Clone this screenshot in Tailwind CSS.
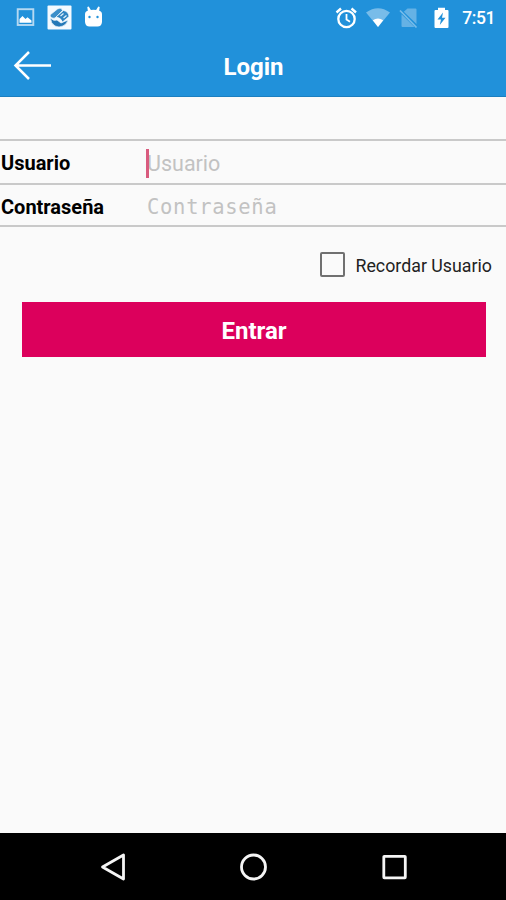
<!DOCTYPE html>
<html lang="es">
<head>
<meta charset="utf-8">
<title>Login</title>
<script src="https://cdn.jsdelivr.net/npm/@tailwindcss/browser@4"></script>
</head>
<body class="flex h-[900px] w-[506px] flex-col overflow-hidden bg-[#fafafa] font-['Roboto',sans-serif] text-black">
<header class="h-[97px] shrink-0 border-b border-[#1c7fc0] bg-[#2191da] text-white">
  <div class="flex h-[35px] items-center justify-between pl-4 pr-[11px]">
    <div class="flex items-center">
      <svg class="h-[19px] w-[19px]" viewBox="0 0 19 19"><rect x="1.7" y="1.2" width="15.6" height="15.8" fill="none" stroke="#b5d9f2" stroke-width="1.9"/><path d="M3.500 14.800V11l3-3 3 3 2-1.800 4 3.300v2.300z" fill="#fff"/></svg>
      <svg class="ml-3 h-[25px] w-[25px]" viewBox="0 0 25 25"><rect x=".5" y=".5" width="24" height="24" rx="1" fill="#f4faff"/><g stroke="#f4faff" stroke-width=".7" stroke-linejoin="round"><path d="M3 10 10.500 4q4-2 5 1.500L8 13q-4 1-5-3z" fill="#3b8fca"/><path d="M3.500 13q3 3.500 6.500 2l4 3 7-3q-1 4-5 6-4 2-8 0-4.500-3-4.500-8z" fill="#2479b8"/><path d="m9 12 7.500-6.500q5 1 5.500 6L15.500 17Q14 12.500 9 12z" fill="#2f84c2"/></g><path d="m13.500 11 3-2.500M16.500 13l3-2.500" stroke="#e5f3fc" stroke-width="1.200"/></svg>
      <svg class="ml-3 h-[23px] w-[19px]" viewBox="0 0 19 23" fill="#fff"><path d="M1 8.500q0-3 2.800-3.700L3.300 1l1.400-.4L6.900 4Q9.500 3.500 12.100 4L14.300.6l1.400.4-.5 3.800Q18 5.500 18 8.500V16q-.5 4.500-4.500 4.500h-8Q1.500 20.500 1 16z"/><circle cx="5.500" cy="11" r="1.200" fill="#2191da"/><circle cx="13.500" cy="11" r="1.200" fill="#2191da"/></svg>
    </div>
    <div class="flex items-center">
      <svg class="h-[22px] w-[22px]" viewBox="0 0 22 22" fill="none" stroke="#fff" stroke-width="2.300"><circle cx="11.500" cy="12" r="8.200"/><path d="m1.500 5.500 4.500-4M21 5.500l-4.500-4" stroke-width="2.400"/><path d="M11.500 7v5.500l3.500 2.300" stroke-width="1.800"/></svg>
      <svg class="ml-[9px] h-5 w-6" viewBox="0 0 24 20"><path d="M0 4.500q12-8.500 24 0L12 19z" fill="#78bce9"/><path d="M6.800 12.300q5.200-3.500 10.400 0L12 19z" fill="#fff"/></svg>
      <svg class="ml-[9px] h-[22px] w-[19px]" viewBox="0 0 19 22"><path d="m8.500 1.500 8 0q1 0 1 1V17L4.800 4.800zM2.500 7.300 15.500 20H3.500q-1 0-1-1z" fill="#65b2e5"/><path d="m1 3.500 16.500 17" stroke="#78bce9" stroke-width="1.700"/></svg>
      <svg class="ml-[15px] h-[22px] w-[16px]" viewBox="0 0 16 22"><path d="M2.500 3H5V.8h7V3h2.500q1 0 1 1v16q0 1-1 1h-12q-1 0-1-1V4q0-1 1-1z" fill="#fff"/><path d="m10 5.500-5.500 7H8L6.800 18l5.700-7.300H9z" fill="#2191da"/></svg>
      <span class="ml-[13px] text-[17.500px] font-medium leading-5 tracking-[-0.400px]">7:51</span>
    </div>
  </div>
  <div class="grid h-[62px] grid-cols-[1fr_auto_1fr] items-center pl-px">
    <svg class="ml-[12px] h-8 w-10" viewBox="0 0 40 32" fill="none" stroke="#fff" stroke-width="2.500"><path d="M38 15.500H2.500M16 2 2.500 15.500 16 29"/></svg>
    <h1 class="pt-px text-[24px] font-bold leading-none">Login</h1>
  </div>
</header>
<main class="flex-1 pt-[42px]">
  <label class="flex h-[46px] items-center border-y-2 border-[#c9c9c9] pt-[2px]">
    <span class="w-[147px] pl-px text-[20px] font-bold leading-none">Usuario</span>
    <span class="relative pt-px text-[21.500px] leading-none text-[#c2c2c2]">Usuario<i class="absolute -left-px -top-[3px] h-[29px] w-[3px] bg-[#d95b7e]"></i></span>
  </label>
  <label class="flex h-[42px] items-center border-b-2 border-[#c9c9c9] pt-[3px]">
    <span class="w-[147px] pl-px text-[20px] font-bold leading-none">Contraseña</span>
    <span class="pt-[2px] font-['DejaVu_Sans_Mono',monospace] text-[20.500px] leading-none tracking-[0.700px] text-[#c2c2c2]">Contraseña</span>
  </label>
  <div class="flex h-[75px] items-center justify-end pr-[14px]">
    <span class="mr-[10px] h-[25px] w-[25px] rounded-[2px] border-[2.500px] border-[#707070]"></span>
    <span class="pt-[3px] text-[17.800px] leading-none text-[#222]">Recordar Usuario</span>
  </div>
  <button class="ml-[22px] block h-[55px] w-[464px] bg-[#dc005c] pt-[3px] text-[24px] font-bold leading-none text-white">Entrar</button>
</main>
<nav class="flex h-[67px] shrink-0 items-center bg-black pl-[100px]">
  <svg class="h-[30px] w-[28px]" viewBox="0 0 28 30" fill="none" stroke="#f5f5f5" stroke-width="2.800" stroke-linejoin="round"><path d="M23.500 3v24L2.500 15z"/></svg>
  <svg class="ml-[111px] h-[30px] w-[30px]" viewBox="0 0 30 30" fill="none" stroke="#f5f5f5" stroke-width="2.800"><circle cx="14.500" cy="15" r="12"/></svg>
  <svg class="ml-[112px] h-[28px] w-[28px]" viewBox="0 0 28 28" fill="none" stroke="#f5f5f5" stroke-width="2.800"><rect x="2.800" y="3.300" width="21.500" height="21.500" rx=".5"/></svg>
</nav>
</body>
</html>
